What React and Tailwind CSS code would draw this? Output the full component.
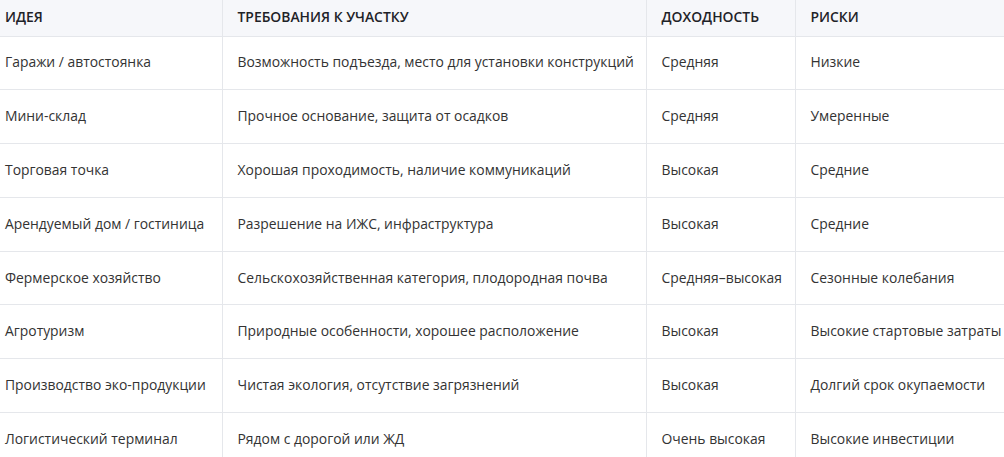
import React from 'react';

const rows = [
  ['Гаражи / автостоянка', 'Возможность подъезда, место для установки конструкций', 'Средняя', 'Низкие'],
  ['Мини-склад', 'Прочное основание, защита от осадков', 'Средняя', 'Умеренные'],
  ['Торговая точка', 'Хорошая проходимость, наличие коммуникаций', 'Высокая', 'Средние'],
  ['Арендуемый дом / гостиница', 'Разрешение на ИЖС, инфраструктура', 'Высокая', 'Средние'],
  ['Фермерское хозяйство', 'Сельскохозяйственная категория, плодородная почва', 'Средняя–высокая', 'Сезонные колебания'],
  ['Агротуризм', 'Природные особенности, хорошее расположение', 'Высокая', 'Высокие стартовые затраты'],
  ['Производство эко-продукции', 'Чистая экология, отсутствие загрязнений', 'Высокая', 'Долгий срок окупаемости'],
  ['Логистический терминал', 'Рядом с дорогой или ЖД', 'Очень высокая', 'Высокие инвестиции'],
];

const App = () => {
  return (
    <div className="w-[1004px] h-[457px] overflow-hidden bg-white" style={{ fontFamily: '"Open Sans", "Noto Sans", sans-serif' }}>
      <table className="table-fixed border-collapse w-[1040px] text-[13.9px] text-[#333333]">
        <colgroup>
          <col className="w-[222px]" />
          <col className="w-[424px]" />
          <col className="w-[149px]" />
          <col className="w-[245px]" />
        </colgroup>
        <thead className="bg-[#f6f7fa]">
          <tr className="h-[36px] border-b border-[#e5e7eb]">
            <th className="pl-[5px] pr-4 text-left font-semibold text-[#1f2328]">ИДЕЯ</th>
            <th className="px-[15px] text-left font-semibold text-[#1f2328] border-l border-[#e5e7eb]">ТРЕБОВАНИЯ К УЧАСТКУ</th>
            <th className="px-[15px] text-left font-semibold text-[#1f2328] border-l border-[#e5e7eb]">ДОХОДНОСТЬ</th>
            <th className="px-[15px] text-left font-semibold text-[#1f2328] border-l border-[#e5e7eb]">РИСКИ</th>
          </tr>
        </thead>
        <tbody>
          {rows.map((r, i) => (
            <tr key={i} className="h-[53.8px] border-b border-[#e5e7eb]">
              <td className="pl-[5px] pr-4 whitespace-nowrap">{r[0]}</td>
              <td className="px-[15px] whitespace-nowrap border-l border-[#e5e7eb]">{r[1]}</td>
              <td className="px-[15px] whitespace-nowrap border-l border-[#e5e7eb]">{r[2]}</td>
              <td className="px-[15px] whitespace-nowrap border-l border-[#e5e7eb]">{r[3]}</td>
            </tr>
          ))}
        </tbody>
      </table>
    </div>
  );
};

export default App;
